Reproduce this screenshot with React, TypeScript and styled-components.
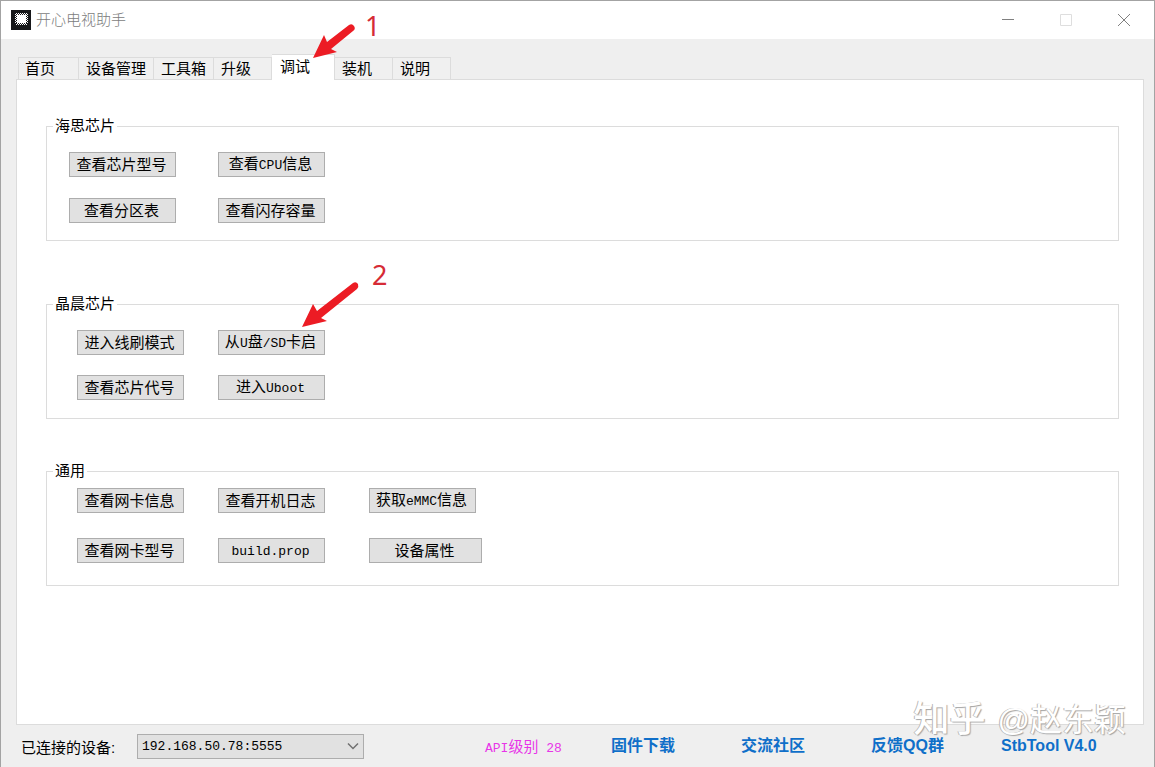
import React, { useState } from "react";
import styled, { createGlobalStyle, css } from "styled-components";

const Global = createGlobalStyle`
  *, *::before, *::after { box-sizing: border-box; }
  body { margin: 0; }
  body, button, select {
    font-family: "Liberation Sans", "Noto Sans CJK SC", sans-serif;
    font-size: 15px;
    line-height: 20px;
    color: #000;
  }
`;

const Window = styled.div`
  position: relative;
  display: flex;
  flex-direction: column;
  min-height: 100vh;
  background: #efefef;
  border: 1px solid #a3a3a3;
  border-bottom: 0;
`;

const TitleBar = styled.header`
  display: flex;
  align-items: center;
  height: 38px;
  padding-left: 10px;
  padding-right: 1px;
  background: #fff;
`;

const Title = styled.h1`
  flex: 1;
  margin: 0 0 0 5px;
  font-size: 15px;
  line-height: 20px;
  font-weight: 300;
  color: #7c7c7c;
`;

const Control = styled.button<{ $faint?: boolean }>`
  display: grid;
  place-items: center;
  width: 58px;
  height: 38px;
  padding: 0;
  border: 0;
  background: none;
  color: ${(p) => (p.$faint ? "#dedede" : "#808080")};
`;

const Body = styled.main`
  flex: 1;
  display: flex;
  flex-direction: column;
  padding: 15px 10px 0 15px;
`;

const Tabs = styled.div`
  display: flex;
  align-items: flex-end;
  height: 25px;
  padding-left: 2px;
`;

const Tab = styled.button<{ $width: number; $active: boolean }>`
  width: ${(p) => p.$width}px;
  height: 22px;
  padding: 0 0 0 7px;
  text-align: left;
  white-space: nowrap;
  border: 1px solid #dcdcdc;
  border-width: 1px 1px 0 0;
  background: #f0f0f0;
  &:first-child { border-left-width: 1px; padding-left: 6px; }
  ${(p) =>
    p.$active &&
    css`
      z-index: 1;
      height: 26px;
      margin-bottom: -1px;
      padding: 0 0 2px 8px;
      background: #fff;
    `}
`;

const Panel = styled.section`
  flex: 1;
  display: flex;
  flex-direction: column;
  padding: 36px 24px 36px 29px;
  background: #fff;
  border: 1px solid #dcdcdc;
`;

const Group = styled.fieldset<{ $space: number; $top: number; $left: number }>`
  min-width: 0;
  min-height: 125px;
  margin: 0 0 ${(p) => p.$space}px;
  padding: ${(p) => p.$top}px 0 0 ${(p) => p.$left}px;
  border: 1px solid #dcdcdc;
`;

const Legend = styled.legend<{ $pull: number }>`
  margin-left: -${(p) => p.$pull}px;
  padding: 0 2px;
  height: 20px;
`;

const ButtonGrid = styled.div<{ $columns: string; $rowGap: number }>`
  display: grid;
  grid-template-columns: ${(p) => p.$columns};
  row-gap: ${(p) => p.$rowGap}px;
`;

const Action = styled.button<{ $wide?: boolean }>`
  width: ${(p) => (p.$wide ? 113 : 107)}px;
  height: 25px;
  padding: 0 2px 0 0;
  white-space: nowrap;
  border: 1px solid #adadad;
  background: #e1e1e1;
`;

const Mono = styled.span`
  font-family: "Liberation Mono", monospace;
  font-size: 13px;
`;

const Footer = styled.footer`
  display: flex;
  align-items: center;
  height: 42px;
  padding: 0 23px 0 20px;
`;

const DeviceLabel = styled.label`
  width: 116px;
  padding-top: 4px;
  white-space: nowrap;
`;

const SelectBox = styled.div`
  display: grid;
  align-items: center;
  width: 227px;
  & > * { grid-area: 1 / 1; }
  & > svg { justify-self: end; margin-right: 5px; pointer-events: none; }
`;

const Select = styled.select`
  appearance: none;
  width: 100%;
  height: 25px;
  padding: 2px 24px 0 4px;
  border: 1px solid #adadad;
  border-radius: 0;
  background: #e1e1e1;
  font-family: "Liberation Mono", monospace;
  font-size: 13px;
`;

const Level = styled.span`
  width: 126px;
  margin-left: 121px;
  padding-top: 4px;
  white-space: nowrap;
  color: #e835e8;
`;

const Links = styled.nav`
  flex: 1;
  display: grid;
  grid-template-columns: repeat(4, 1fr);
`;

const FooterLink = styled.a`
  font-size: 16px;
  font-weight: 700;
  white-space: nowrap;
  text-decoration: none;
  color: #0f6fc9;
`;

const Arrow = styled.svg`
  position: absolute;
  left: 0;
  top: 0;
  width: 400px;
  height: 340px;
  z-index: 2;
  pointer-events: none;
`;

const Step = styled.span<{ $x: number; $y: number }>`
  position: absolute;
  left: ${(p) => p.$x}px;
  top: ${(p) => p.$y}px;
  z-index: 2;
  font-family: "Noto Sans", sans-serif;
  font-size: 27px;
  line-height: 32px;
  color: #d62b36;
`;

const Watermark = styled.div`
  position: absolute;
  right: 28px;
  bottom: 31px;
  z-index: 3;
  display: flex;
  align-items: center;
  gap: 12px;
  font-size: 32px;
  line-height: 32px;
  white-space: nowrap;
  color: #fff;
  text-shadow: -1px 0 0 #b8b8b8, 1px 1px 1px #a4a4a4;
  pointer-events: none;
`;

const Brand = styled.span`
  font-size: 36px;
  font-weight: 500;
`;

const tabs: [string, number][] = [
  ["首页", 61],
  ["设备管理", 75],
  ["工具箱", 60],
  ["升级", 58],
  ["调试", 63],
  ["装机", 58],
  ["说明", 58],
];

const ChipIcon = () => (
  <svg width="20" height="20" viewBox="0 0 20 20" aria-hidden="true">
    <rect width="20" height="20" fill="#17181a" />
    <rect x="6" y="5" width="9" height="8" fill="#fff" />
    <path
      d="M5 3.5H16M5 14.5H16M4.5 4V14M16.5 4V14"
      stroke="#fff"
      strokeDasharray="1 1"
    />
    <path
      d="M6 4.5H15M6 13.5H15M5.5 5V13M15.5 5V13"
      stroke="#fff"
      strokeDasharray="1 1"
    />
  </svg>
);

export default function App() {
  const [active, setActive] = useState("调试");
  return (
    <>
      <Global />
      <Window>
        <TitleBar>
          <ChipIcon />
          <Title>开心电视助手</Title>
          <Control aria-label="最小化">
            <svg width="12" height="12" stroke="currentColor"><path d="M0 5.5H12" /></svg>
          </Control>
          <Control aria-label="最大化" $faint>
            <svg width="12" height="12" fill="none" stroke="currentColor"><path d="M.5 .5H11.5V11.5H.5Z" /></svg>
          </Control>
          <Control aria-label="关闭">
            <svg width="12" height="12" stroke="currentColor"><path d="M0 0L12 12M12 0L0 12" /></svg>
          </Control>
        </TitleBar>
        <Body>
          <Tabs role="tablist">
            {tabs.map(([name, width]) => (
              <Tab
                key={name}
                role="tab"
                aria-selected={active === name}
                $width={width}
                $active={active === name}
                onClick={() => setActive(name)}
              >
                {name}
              </Tab>
            ))}
          </Tabs>
          <Panel>
            <Group $space={53} $top={16} $left={22}>
              <Legend $pull={16}>海思芯片</Legend>
              <ButtonGrid $columns="149px 107px" $rowGap={21}>
                <Action>查看芯片型号</Action>
                <Action>查看<Mono>CPU</Mono>信息</Action>
                <Action>查看分区表</Action>
                <Action>查看闪存容量</Action>
              </ButtonGrid>
            </Group>
            <Group $space={42} $top={16} $left={30}>
              <Legend $pull={24}>晶晨芯片</Legend>
              <ButtonGrid $columns="141px 107px" $rowGap={20}>
                <Action>进入线刷模式</Action>
                <Action>从<Mono>U</Mono>盘<Mono>/SD</Mono>卡启</Action>
                <Action>查看芯片代号</Action>
                <Action>进入<Mono>Uboot</Mono></Action>
              </ButtonGrid>
            </Group>
            <Group $space={0} $top={7} $left={30}>
              <Legend $pull={24}>通用</Legend>
              <ButtonGrid $columns="141px 151px 113px" $rowGap={25}>
                <Action>查看网卡信息</Action>
                <Action>查看开机日志</Action>
                <Action>获取<Mono>eMMC</Mono>信息</Action>
                <Action>查看网卡型号</Action>
                <Action><Mono>build.prop</Mono></Action>
                <Action $wide>设备属性</Action>
              </ButtonGrid>
            </Group>
          </Panel>
        </Body>
        <Footer>
          <DeviceLabel htmlFor="device">已连接的设备:</DeviceLabel>
          <SelectBox>
            <Select id="device">
              <option>192.168.50.78:5555</option>
            </Select>
            <svg width="12" height="8" fill="none" stroke="#707070" strokeWidth="1.5">
              <path d="M1 1.5L6 6.5L11 1.5" />
            </svg>
          </SelectBox>
          <Level><Mono>API</Mono>级别<Mono> 28</Mono></Level>
          <Links>
            <FooterLink href="#firmware">固件下载</FooterLink>
            <FooterLink href="#community">交流社区</FooterLink>
            <FooterLink href="#feedback">反馈QQ群</FooterLink>
            <FooterLink href="#version">StbTool V4.0</FooterLink>
          </Links>
        </Footer>
        <Arrow viewBox="1 1 400 340" fill="#ec1c24" aria-hidden="true">
          <path d="M313 58L324 35L327 42L349 25Q352 23 354 26Q356 29 353 31L331 49L337 52Z" />
          <path d="M302 327L313 304L317 311L353 283Q356 281 358 284Q359 287 357 289L321 318L327 321Z" />
        </Arrow>
        <Step $x={364} $y={9}>1</Step>
        <Step $x={371} $y={258}>2</Step>
        <Watermark><Brand>知乎</Brand><span>@赵东颖</span></Watermark>
      </Window>
    </>
  );
}
